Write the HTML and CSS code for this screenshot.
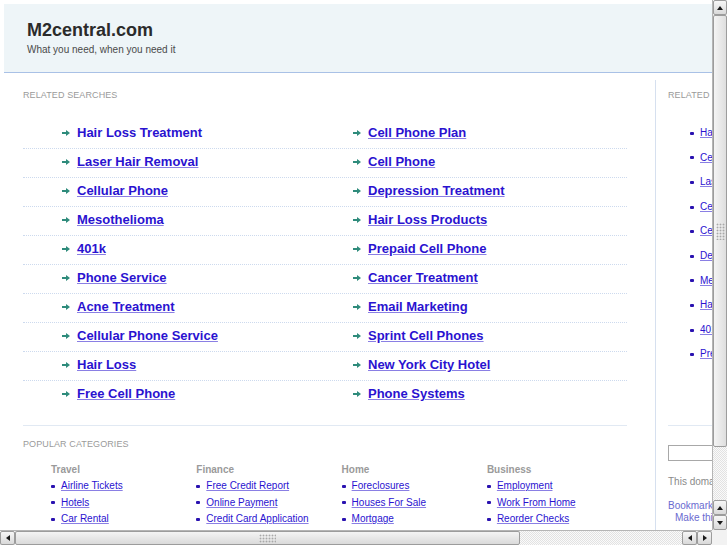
FILE: index.html
```html
<!DOCTYPE html>
<html>
<head>
<meta charset="utf-8">
<title>M2central.com</title>
<link rel="stylesheet" href="styles.css">
</head>
<body>
<div class="screen">
  <div class="viewport">
    <div class="page">
      <header class="header">
        <h1>M2central.com</h1>
        <p>What you need, when you need it</p>
      </header>
      <div class="content">
        <main class="main">
          <h2 class="label">Related Searches</h2>
          <ul class="searches">
            <li><div class="cell"><svg class="arr" viewBox="0 0 8 6"><path d="M0 2h4V0l4 3-4 3V4H0z"/></svg><a href="#" class="nou">Hair Loss Treatment</a></div><div class="cell"><svg class="arr" viewBox="0 0 8 6"><path d="M0 2h4V0l4 3-4 3V4H0z"/></svg><a href="#">Cell Phone Plan</a></div></li>
            <li><div class="cell"><svg class="arr" viewBox="0 0 8 6"><path d="M0 2h4V0l4 3-4 3V4H0z"/></svg><a href="#">Laser Hair Removal</a></div><div class="cell"><svg class="arr" viewBox="0 0 8 6"><path d="M0 2h4V0l4 3-4 3V4H0z"/></svg><a href="#">Cell Phone</a></div></li>
            <li><div class="cell"><svg class="arr" viewBox="0 0 8 6"><path d="M0 2h4V0l4 3-4 3V4H0z"/></svg><a href="#">Cellular Phone</a></div><div class="cell"><svg class="arr" viewBox="0 0 8 6"><path d="M0 2h4V0l4 3-4 3V4H0z"/></svg><a href="#">Depression Treatment</a></div></li>
            <li><div class="cell"><svg class="arr" viewBox="0 0 8 6"><path d="M0 2h4V0l4 3-4 3V4H0z"/></svg><a href="#">Mesothelioma</a></div><div class="cell"><svg class="arr" viewBox="0 0 8 6"><path d="M0 2h4V0l4 3-4 3V4H0z"/></svg><a href="#">Hair Loss Products</a></div></li>
            <li><div class="cell"><svg class="arr" viewBox="0 0 8 6"><path d="M0 2h4V0l4 3-4 3V4H0z"/></svg><a href="#">401k</a></div><div class="cell"><svg class="arr" viewBox="0 0 8 6"><path d="M0 2h4V0l4 3-4 3V4H0z"/></svg><a href="#">Prepaid Cell Phone</a></div></li>
            <li><div class="cell"><svg class="arr" viewBox="0 0 8 6"><path d="M0 2h4V0l4 3-4 3V4H0z"/></svg><a href="#">Phone Service</a></div><div class="cell"><svg class="arr" viewBox="0 0 8 6"><path d="M0 2h4V0l4 3-4 3V4H0z"/></svg><a href="#">Cancer Treatment</a></div></li>
            <li><div class="cell"><svg class="arr" viewBox="0 0 8 6"><path d="M0 2h4V0l4 3-4 3V4H0z"/></svg><a href="#">Acne Treatment</a></div><div class="cell"><svg class="arr" viewBox="0 0 8 6"><path d="M0 2h4V0l4 3-4 3V4H0z"/></svg><a href="#">Email Marketing</a></div></li>
            <li><div class="cell"><svg class="arr" viewBox="0 0 8 6"><path d="M0 2h4V0l4 3-4 3V4H0z"/></svg><a href="#">Cellular Phone Service</a></div><div class="cell"><svg class="arr" viewBox="0 0 8 6"><path d="M0 2h4V0l4 3-4 3V4H0z"/></svg><a href="#">Sprint Cell Phones</a></div></li>
            <li><div class="cell"><svg class="arr" viewBox="0 0 8 6"><path d="M0 2h4V0l4 3-4 3V4H0z"/></svg><a href="#">Hair Loss</a></div><div class="cell"><svg class="arr" viewBox="0 0 8 6"><path d="M0 2h4V0l4 3-4 3V4H0z"/></svg><a href="#">New York City Hotel</a></div></li>
            <li><div class="cell"><svg class="arr" viewBox="0 0 8 6"><path d="M0 2h4V0l4 3-4 3V4H0z"/></svg><a href="#">Free Cell Phone</a></div><div class="cell"><svg class="arr" viewBox="0 0 8 6"><path d="M0 2h4V0l4 3-4 3V4H0z"/></svg><a href="#">Phone Systems</a></div></li>
          </ul>
          <section class="popular">
            <h2 class="label">Popular Categories</h2>
            <div class="cats">
              <div class="cat">
                <h3>Travel</h3>
                <ul>
                  <li><a href="#">Airline Tickets</a></li>
                  <li><a href="#">Hotels</a></li>
                  <li><a href="#">Car Rental</a></li>
                </ul>
              </div>
              <div class="cat">
                <h3>Finance</h3>
                <ul>
                  <li><a href="#">Free Credit Report</a></li>
                  <li><a href="#">Online Payment</a></li>
                  <li><a href="#">Credit Card Application</a></li>
                </ul>
              </div>
              <div class="cat">
                <h3>Home</h3>
                <ul>
                  <li><a href="#">Foreclosures</a></li>
                  <li><a href="#">Houses For Sale</a></li>
                  <li><a href="#">Mortgage</a></li>
                </ul>
              </div>
              <div class="cat">
                <h3>Business</h3>
                <ul>
                  <li><a href="#">Employment</a></li>
                  <li><a href="#">Work From Home</a></li>
                  <li><a href="#">Reorder Checks</a></li>
                </ul>
              </div>
            </div>
          </section>
        </main>
        <aside class="side">
          <h2 class="label">Related Searches</h2>
          <ul class="side-list">
            <li><a href="#">Hair Loss Treatment</a></li>
            <li><a href="#">Cell Phone Plan</a></li>
            <li><a href="#">Laser Hair Removal</a></li>
            <li><a href="#">Cell Phone</a></li>
            <li><a href="#">Cellular Phone</a></li>
            <li><a href="#">Depression Treatment</a></li>
            <li><a href="#">Mesothelioma</a></li>
            <li><a href="#">Hair Loss Products</a></li>
            <li><a href="#">401k</a></li>
            <li><a href="#">Prepaid Cell Phone</a></li>
          </ul>
          <div class="side-sep"></div>
          <input class="search" type="text">
          <p class="note">This domain may be for sale</p>
          <a href="#" class="bm">Bookmark this page</a>
          <a href="#" class="bm indent">Make this your homepage</a>
        </aside>
      </div>
    </div>
  </div>
  <div class="vscroll">
    <div class="btn"><span class="tri up"></span></div>
    <div class="thumb vthumb"><span class="grip vgrip"></span></div>
    <div class="track"></div>
    <div class="btn"><span class="tri up"></span></div>
    <div class="btn"><span class="tri down"></span></div>
  </div>
  <div class="hscroll">
    <div class="btn"><span class="tri left"></span></div>
    <div class="thumb hthumb"><span class="grip hgrip"></span></div>
    <div class="track"></div>
    <div class="btn"><span class="tri left"></span></div>
    <div class="btn"><span class="tri right"></span></div>
  </div>
  <div class="corner"></div>
</div>
</body>
</html>
```
FILE: styles.css
```css
* { box-sizing: border-box; margin: 0; padding: 0; }
html, body { width: 727px; height: 545px; overflow: hidden; }
body { font-family: "Liberation Sans", Arial, sans-serif; background: #fff; color: #333; }

.screen {
  display: grid;
  grid-template-columns: 712px 15px;
  grid-template-rows: 530px 15px;
  width: 727px;
  height: 545px;
}
.viewport { overflow: hidden; background: #fff; }
.page { width: 860px; padding: 4px 4px 0; }

.header {
  background: #eef5f8;
  border-bottom: 1px solid #a9c1e6;
  padding: 15px 23px 16px;
}
.header h1 { font-size: 18px; line-height: 22px; font-weight: bold; color: #2b2b2b; }
.header p { font-size: 10px; line-height: 12px; margin-top: 3px; color: #4a4a4a; }

.content { display: flex; padding-top: 7px; min-height: 470px; }

.label {
  font-size: 9px;
  line-height: 12px;
  font-weight: normal;
  color: #9a9a9a;
  text-transform: uppercase;
  letter-spacing: 0.1px;
  white-space: nowrap;
}

a { color: #2a12d0; text-decoration: underline; text-decoration-color: #8a7fe4; }

.main { width: 651px; flex: none; padding: 9px 28px 0 19px; }

.searches { list-style: none; margin-top: 19px; }
.searches li {
  display: grid;
  grid-template-columns: 291px 1fr;
  padding: 5px 0 7px;
  border-bottom: 1px dotted #cddaee;
}
.searches li:last-child { border-bottom: 0; }
.cell { display: flex; align-items: center; gap: 7px; padding-left: 39px; }
.arr { width: 8px; height: 6px; fill: #2e8b7b; flex: none; }
.searches a { font-size: 13px; line-height: 16px; font-weight: bold; white-space: nowrap; }
.searches a.nou { text-decoration: none; }

.popular { margin-top: 16px; border-top: 1px solid #e1e9f3; padding-top: 12px; }
.cats { display: grid; grid-template-columns: repeat(4, 145.3px); padding-left: 28px; margin-top: 14px; }
.cat h3 { font-size: 10px; line-height: 12px; font-weight: bold; color: #9a9a9a; margin-bottom: 2px; }
.cat ul, .side-list { list-style: none; }
.cat li { font-size: 10px; line-height: 16.5px; display: flex; align-items: center; white-space: nowrap; }
.cat li::before, .side-list li::before {
  content: "";
  width: 4px;
  height: 3px;
  border-radius: 1px;
  background: #2a12b0;
  margin-right: 6px;
  flex: none;
}

.side { flex: 1; border-left: 1px solid #d6e0ef; padding: 9px 0 0 12px; }
.side-list { margin-top: 20px; padding-left: 22px; }
.side-list li { font-size: 10px; line-height: 24.6px; display: flex; align-items: center; white-space: nowrap; }
.side-sep { margin-top: 58px; border-top: 1px solid #e1e9f3; }
.search { display: block; margin-top: 19px; width: 140px; height: 16px; border: 1px solid #a8a8a8; background: #fff; }
.note { margin-top: 15px; font-size: 10px; line-height: 12px; color: #8a8a8a; white-space: nowrap; }
.bm { display: block; margin-top: 12px; font-size: 10px; line-height: 12px; color: #6a6ad0; text-decoration: none; white-space: nowrap; }
.bm.indent { margin-top: 0; padding-left: 7px; }

/* scrollbars */
.vscroll, .hscroll {
  display: flex;
  background: repeating-conic-gradient(#e2e2e2 0 25%, #fafafa 0 50%) 0 0 / 2px 2px;
}
.vscroll { flex-direction: column; border-left: 1px solid #b5b5b5; }
.hscroll { border-top: 1px solid #b5b5b5; }
.btn {
  flex: none;
  width: 15px;
  height: 15px;
  background: linear-gradient(#f7f7f7, #d9d9d9);
  border: 1px solid #9c9c9c;
  border-radius: 2px;
  display: flex;
  align-items: center;
  justify-content: center;
}
.vscroll .btn { width: 14px; }
.hscroll .btn { height: 14px; }
.thumb {
  flex: none;
  background: linear-gradient(90deg, #f4f4f4, #dedede);
  border: 1px solid #9c9c9c;
  border-radius: 2px;
  display: flex;
  align-items: center;
  justify-content: center;
}
.vthumb { height: 432px; width: 14px; }
.hthumb { width: 505px; height: 14px; background: linear-gradient(#f4f4f4, #dadada); }
.track { flex: 1; }
.grip { background: radial-gradient(circle, #a8a8a8 0.8px, transparent 1.1px) 0 0 / 3px 3px; }
.vgrip { width: 9px; height: 17px; }
.hgrip { width: 17px; height: 9px; }
.tri { width: 0; height: 0; border: 3px solid transparent; }
.tri.up { border-bottom: 4px solid #1a1a1a; border-top: 0; }
.tri.down { border-top: 4px solid #1a1a1a; border-bottom: 0; }
.tri.left { border-right: 4px solid #1a1a1a; border-left: 0; }
.tri.right { border-left: 4px solid #1a1a1a; border-right: 0; }
.corner { background: #f2f2f2; }
```
